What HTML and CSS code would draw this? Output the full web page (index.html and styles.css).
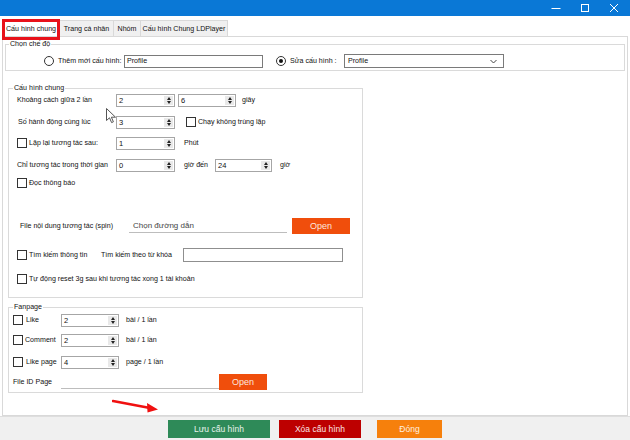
FILE: index.html
```html
<!DOCTYPE html>
<html lang="vi">
<head>
<meta charset="utf-8">
<title>Cấu hình</title>
<link rel="stylesheet" href="styles.css">
</head>
<body>
<div class="window">
  <div class="titlebar">
    <span class="ctl"><svg width="10" height="10" viewBox="0 0 10 10"><path d="M0.5 5.5H9.5" stroke="#fff" stroke-width="1"/></svg></span>
    <span class="ctl"><svg width="10" height="10" viewBox="0 0 10 10"><rect x="1.5" y="1.5" width="7" height="7" fill="none" stroke="#fff" stroke-width="1"/></svg></span>
    <span class="ctl"><svg width="10" height="10" viewBox="0 0 10 10"><path d="M1 1L9 9M9 1L1 9" stroke="#fff" stroke-width="1"/></svg></span>
  </div>
  <div class="client">
    <div class="tabs">
      <div class="tab active t1">Cấu hình chung</div>
      <div class="tab t2">Trang cá nhân</div>
      <div class="tab t3">Nhóm</div>
      <div class="tab t4">Cấu hình Chung LDPlayer</div>
    </div>
    <div class="page">
      <fieldset class="grp g1">
        <legend>Chọn chế độ</legend>
        <div class="row r-mode">
          <span class="radio"></span>
          <span class="lbl w-add">Thêm mới cấu hình:</span>
          <span class="textbox w-profile">Profile</span>
          <span class="radio checked ml-radio2"></span>
          <span class="lbl w-edit">Sửa cấu hình :</span>
          <span class="combo">Profile<svg class="chev" width="7" height="5" viewBox="0 0 7 5"><path d="M0.5 1L3.5 4L6.5 1" fill="none" stroke="#444" stroke-width="1"/></svg></span>
        </div>
      </fieldset>

      <fieldset class="grp g2">
        <legend>Cấu hình chung</legend>
        <div class="inner2">
          <div class="row r1">
            <span class="lbl w-99">Khoảng cách giữa 2 lần</span>
            <span class="spin w59"><span class="val">2</span><span class="ud"><i class="up"></i><i class="dn"></i></span></span>
            <span class="spin w58 ml3"><span class="val">6</span><span class="ud"><i class="up"></i><i class="dn"></i></span></span>
            <span class="lbl ml6">giây</span>
          </div>
          <div class="row r2">
            <span class="lbl w-99 pl1">Số hành động cùng lúc</span>
            <span class="spin w59"><span class="val">3</span><span class="ud"><i class="up"></i><i class="dn"></i></span></span>
            <span class="check ml11"></span>
            <span class="lbl ml2">Chạy không trùng lặp</span>
          </div>
          <div class="row r3">
            <span class="check"></span>
            <span class="lbl w-87 ml2">Lặp lại tương tác sau:</span>
            <span class="spin w59"><span class="val">1</span><span class="ud"><i class="up"></i><i class="dn"></i></span></span>
            <span class="lbl ml9">Phút</span>
          </div>
          <div class="row r4">
            <span class="lbl w-99">Chỉ tương tác trong thời gian</span>
            <span class="spin w59"><span class="val">0</span><span class="ud"><i class="up"></i><i class="dn"></i></span></span>
            <span class="lbl ml9 w-31">giờ đến</span>
            <span class="spin w57"><span class="val">24</span><span class="ud"><i class="up"></i><i class="dn"></i></span></span>
            <span class="lbl ml8">giờ</span>
          </div>
          <div class="row r5">
            <span class="check"></span>
            <span class="lbl ml2">Đọc thông báo</span>
          </div>
          <div class="row r6">
            <span class="lbl w-109 ml3">File nội dung tương tác (spin)</span>
            <span class="path w158">Chọn đường dẫn</span>
            <span class="btn-open w58 ml5">Open</span>
          </div>
          <div class="row r7">
            <span class="check"></span>
            <span class="lbl ml2 w-72">Tìm kiếm thông tin</span>
            <span class="lbl w-82">Tìm kiếm theo từ khóa</span>
            <span class="textbox w160 light">&nbsp;</span>
          </div>
          <div class="row r8">
            <span class="check"></span>
            <span class="lbl ml2">Tự động reset 3g sau khi tương tác xong 1 tài khoản</span>
          </div>
        </div>
      </fieldset>

      <fieldset class="grp g3">
        <legend>Fanpage</legend>
        <div class="inner3">
          <div class="row f1">
            <span class="check"></span>
            <span class="lbl ml3 w-35">Like</span>
            <span class="spin w58"><span class="val">2</span><span class="ud"><i class="up"></i><i class="dn"></i></span></span>
            <span class="lbl ml7">bài / 1 lần</span>
          </div>
          <div class="row f2">
            <span class="check"></span>
            <span class="lbl ml2 w-36">Comment</span>
            <span class="spin w58"><span class="val">2</span><span class="ud"><i class="up"></i><i class="dn"></i></span></span>
            <span class="lbl ml7">bài / 1 lần</span>
          </div>
          <div class="row f3">
            <span class="check"></span>
            <span class="lbl ml3 w-35">Like page</span>
            <span class="spin w58"><span class="val">4</span><span class="ud"><i class="up"></i><i class="dn"></i></span></span>
            <span class="lbl ml7">page / 1 lần</span>
          </div>
          <div class="row f4">
            <span class="lbl w-48">File ID Page</span>
            <span class="path w158">&nbsp;</span>
            <span class="btn-open w48">Open</span>
          </div>
        </div>
      </fieldset>
    </div>
  </div>
  <div class="footer">
    <span class="fbtn save">Lưu cấu hình</span>
    <span class="fbtn del">Xóa cấu hình</span>
    <span class="fbtn close">Đóng</span>
  </div>

  <div class="hl-tab"></div>
  <svg class="arrow" width="50" height="14" viewBox="0 0 50 14"><path d="M1 2L38 9" stroke="#f01010" stroke-width="2.6" stroke-linecap="round"/><path d="M46 10.5L35 4L35.5 13.5Z" fill="#f01010"/></svg>
  <svg class="cursor" width="11" height="16" viewBox="0 0 11 16"><path d="M0.5 0.5V12.5L3.5 9.8L5.6 14.6L7.4 13.8L5.4 9.2H9.5Z" fill="#fff" stroke="#555" stroke-width="1" stroke-linejoin="round"/></svg>
</div>
</body>
</html>
```

FILE: styles.css
```css
* { box-sizing: border-box; }
html, body { margin: 0; padding: 0; }
body {
  width: 630px;
  height: 440px;
  overflow: hidden;
  background: #fff;
  font-family: "Liberation Sans", Arial, sans-serif;
  font-size: 7.1px;
  color: #111;
}
.window {
  position: relative;
  width: 630px;
  height: 440px;
  display: flex;
  flex-direction: column;
}
.titlebar {
  height: 16px;
  flex: none;
  background: #0a78d6;
  display: flex;
  justify-content: flex-end;
  align-items: center;
  padding-right: 2px;
}
.ctl {
  width: 29px;
  height: 16px;
  display: flex;
  align-items: center;
  justify-content: center;
}
.ctl svg { display: block; }

.client {
  height: 400px;
  flex: none;
  background: #fff;
  padding-top: 4px;
}
.tabs {
  display: flex;
  height: 16px;
  padding-left: 2px;
}
.tab {
  height: 16px;
  border: 1px solid #d9d9d9;
  border-bottom: none;
  background: #f0f0f0;
  display: flex;
  align-items: center;
  justify-content: center;
  white-space: nowrap;
  margin-right: -1px;
}
.tab.active { background: #fff; }
.t1 { width: 58px; }
.t2 { width: 55px; }
.t3 { width: 28px; }
.t4 { width: 88px; }

.page {
  margin-left: 2px;
  width: 626px;
  height: 380px;
  border: 1px solid #d9d9d9;
}

.grp {
  margin: 0;
  padding: 0;
  border: 1px solid #dadada;
  min-width: 0;
}
.grp legend {
  padding: 0 1px;
  margin-left: 4px;
  line-height: 10px;
  height: 10px;
}
.g1 {
  margin: 2px 0 0 2px;
  width: 620px;
  height: 32px;
}
.g1 legend { margin-left: 3px; }
.g2 {
  margin: 12px 0 0 5px;
  width: 355px;
  height: 215px;
}
.g3 {
  margin: 4px 0 0 5px;
  width: 355px;
  height: 91px;
}

.row {
  display: flex;
  align-items: center;
  height: 14px;
  white-space: nowrap;
}
.r-mode { margin-top: 5px; padding-left: 38px; }

.inner2 { padding-left: 8px; }
.r2 { margin-top: 8px; }
.r3 { margin-top: 7px; }
.r4 { margin-top: 8px; }
.r5 { margin-top: 4px; }
.r6 { margin-top: 28px; height: 16px; }
.r7 { margin-top: 14px; }
.r8 { margin-top: 10px; }

.inner3 { padding-left: 4px; }
.f1 { margin-top: 1px; }
.f2 { margin-top: 6px; }
.f3 { margin-top: 8px; }
.f4 { margin-top: 5px; height: 16px; }

.lbl { display: inline-block; flex: none; }
.w-99 { width: 99px; }
.w-87 { width: 87px; }
.w-31 { width: 31px; }
.w-109 { width: 109px; }
.w-72 { width: 72px; }
.w-82 { width: 82px; }
.w-35 { width: 35px; }
.w-36 { width: 36px; }
.w-48 { width: 48px; }
.w-add { width: 66px; margin-left: 4px; }
.w-edit { width: 54px; margin-left: 4px; }
.pl1 { padding-left: 1px; }
.ml2 { margin-left: 2px; }
.ml3 { margin-left: 3px; }
.ml5 { margin-left: 5px; }
.ml6 { margin-left: 6px; }
.ml7 { margin-left: 7px; }
.ml8 { margin-left: 8px; }
.ml9 { margin-left: 9px; }
.ml11 { margin-left: 11px; }
.ml-radio2 { margin-left: 13px; }

.radio {
  flex: none;
  width: 10px;
  height: 10px;
  border: 1px solid #333;
  border-radius: 50%;
  background: #fff;
  position: relative;
}
.radio.checked::after {
  content: "";
  position: absolute;
  left: 2px;
  top: 2px;
  width: 4px;
  height: 4px;
  border-radius: 50%;
  background: #111;
}
.check {
  flex: none;
  width: 10px;
  height: 10px;
  border: 1px solid #333;
  background: #fff;
}

.textbox {
  flex: none;
  height: 13px;
  border: 1px solid #7a7a7a;
  background: #fff;
  padding-left: 2px;
  line-height: 11px;
}
.textbox.light { border-color: #8f8f8f; height: 14px; }
.w-profile { width: 139px; }
.w160 { width: 160px; }

.combo {
  flex: none;
  width: 160px;
  height: 14px;
  border: 1px solid #7a7a7a;
  background: #fff;
  padding-left: 3px;
  line-height: 12px;
  display: flex;
  align-items: center;
  justify-content: space-between;
  padding-right: 6px;
}
.chev { display: block; }

.spin {
  flex: none;
  height: 13px;
  border: 1px solid #a6a6a6;
  background: #fff;
  display: flex;
  justify-content: space-between;
}
.w59 { width: 59px; }
.w58 { width: 58px; }
.w57 { width: 57px; }
.spin .val { padding-left: 2px; line-height: 11px; font-size: 7.5px; }
.spin .ud {
  width: 9px;
  margin: 1px 1px 1px 0;
  background: #e9e9e9;
  display: flex;
  flex-direction: column;
  align-items: center;
  justify-content: center;
  gap: 1px;
}
.spin .ud i {
  display: block;
  width: 0;
  height: 0;
  border-left: 2px solid transparent;
  border-right: 2px solid transparent;
}
.spin .ud .up { border-bottom: 3px solid #222; }
.spin .ud .dn { border-top: 3px solid #222; }

.path {
  flex: none;
  height: 14px;
  border-bottom: 1px solid #bdbdbd;
  padding-left: 4px;
  color: #444;
  font-size: 8px;
  line-height: 14px;
}
.w158 { width: 158px; }

.btn-open {
  flex: none;
  height: 16px;
  background: #f04e0c;
  color: #fde8de;
  display: flex;
  align-items: center;
  justify-content: center;
  font-size: 9px;
}
.w58 { width: 58px; }
.w48 { width: 48px; }

.footer {
  flex: 1;
  background: #f0f0f0;
  border-top: 1px solid #dedede;
  display: flex;
  padding: 3px 0 0 168px;
  align-items: flex-start;
}
.fbtn {
  height: 18px;
  display: flex;
  align-items: center;
  justify-content: center;
  font-size: 8.5px;
}
.save { width: 102px; background: #2e8a58; color: #e8f3ec; }
.del { width: 82px; background: #bd0000; margin-left: 9px; color: #fbe4e4; }
.close { width: 65px; background: #f6800c; margin-left: 16px; color: #fff1e0; }

.hl-tab {
  position: absolute;
  left: 2px;
  top: 19px;
  width: 58px;
  height: 21px;
  border: 3px solid #e8121a;
}
.arrow {
  position: absolute;
  left: 112px;
  top: 399px;
}
.cursor {
  position: absolute;
  left: 106px;
  top: 108px;
}
```
